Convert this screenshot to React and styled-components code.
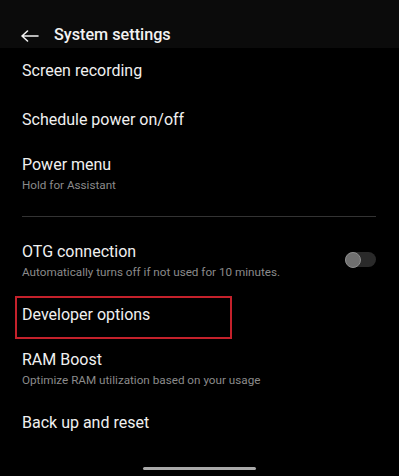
import React from "react";
import styled, { createGlobalStyle } from "styled-components";

const Global = createGlobalStyle`
  html, body { margin: 0; padding: 0; background: #000; }
  body { font-family: Roboto, "Noto Sans", Arial, sans-serif; -webkit-font-smoothing: antialiased; }
  * { box-sizing: border-box; }
`;

const Screen = styled.div`
  width: 399px;
  height: 476px;
  background: #000;
  overflow: hidden;
  display: flex;
  flex-direction: column;
`;

const Header = styled.header`
  height: 48px;
  background: #0b0b0b;
  display: flex;
  align-items: flex-start;
  padding: 24px 0 0 21px;
  gap: 15px;
  flex-shrink: 0;
`;

const BackIcon = styled.svg`
  width: 18px;
  height: 22px;
  display: block;
  margin-top: -1px;
`;

const HeaderTitle = styled.h1`
  margin: 0;
  font-size: 16.2px;
  line-height: 22px;
  font-weight: 500;
  color: #f2f2f2;
  letter-spacing: 0;
`;

const List = styled.div`
  display: flex;
  flex-direction: column;
`;

const Row = styled.div`
  position: relative;
  display: flex;
  align-items: center;
  justify-content: space-between;
  padding: 12px 23px ${(p) => (p.$extraBottom ? 15 : 11)}px 22px;

  ${(p) =>
    p.$highlight &&
    `
    &::after {
      content: "";
      position: absolute;
      left: 15px;
      top: 4px;
      width: 213px;
      height: 39px;
      border: 2px solid #c4212b;
      pointer-events: none;
    }
  `}
`;

const Texts = styled.div`
  display: flex;
  flex-direction: column;
`;

const Title = styled.div`
  font-size: 16px;
  line-height: 22px;
  color: #f0f0f0;
  font-weight: 400;
`;

const Subtitle = styled.div`
  font-size: 11.7px;
  line-height: 18px;
  color: #8b8b8b;
`;

const Divider = styled.hr`
  border: none;
  height: 1px;
  background: #333;
  margin: 11px 23px 12px 22px;
`;

const Toggle = styled.div`
  position: relative;
  width: 31px;
  height: 15px;
  border-radius: 8px;
  background: #2a2a2a;
  margin-bottom: 3px;
  flex-shrink: 0;
`;

const Knob = styled.div`
  position: absolute;
  left: 0;
  top: -0.5px;
  width: 16px;
  height: 16px;
  border-radius: 50%;
  background: #6f6f6f;
  border: 1px solid #8e8e8e;
`;

const HomeBar = styled.div`
  width: 113px;
  height: 3px;
  border-radius: 2px;
  background: #a9a9a9;
  margin: 22px auto 0;
`;

const items = [
  { title: "Screen recording", extraBottom: true },
  { title: "Schedule power on/off" },
  { title: "Power menu", subtitle: "Hold for Assistant" },
  { divider: true },
  {
    title: "OTG connection",
    subtitle: "Automatically turns off if not used for 10 minutes.",
    toggle: true,
  },
  { title: "Developer options", highlight: true },
  { title: "RAM Boost", subtitle: "Optimize RAM utilization based on your usage" },
  { title: "Back up and reset" },
];

export default function App() {
  return (
    <>
      <Global />
      <Screen>
        <Header>
          <BackIcon viewBox="0 0 18 22" fill="none">
            <path
              d="M1 13 H17 M1 13 L6.5 8 M1 13 L6.5 18"
              stroke="#f2f2f2"
              strokeWidth="1.6"
              strokeLinecap="round"
              strokeLinejoin="round"
            />
          </BackIcon>
          <HeaderTitle>System settings</HeaderTitle>
        </Header>
        <List>
          {items.map((it, i) =>
            it.divider ? (
              <Divider key={i} />
            ) : (
              <Row key={i} $extraBottom={it.extraBottom} $highlight={it.highlight}>
                <Texts>
                  <Title>{it.title}</Title>
                  {it.subtitle && <Subtitle>{it.subtitle}</Subtitle>}
                </Texts>
                {it.toggle && (
                  <Toggle>
                    <Knob />
                  </Toggle>
                )}
              </Row>
            )
          )}
        </List>
        <HomeBar />
      </Screen>
    </>
  );
}
